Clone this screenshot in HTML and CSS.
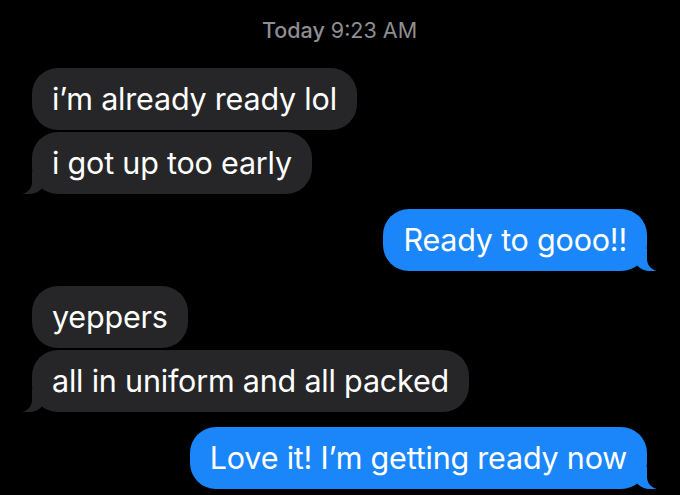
FILE: index.html
```html
<!DOCTYPE html>
<html>
	<head>
		<meta charset="UTF-8">
		<title>Messages</title>
		<link rel="stylesheet" href="styles.css">
	</head>
	<body>
		<div class="thread">
			<div class="stamp"><span class="day">Today</span> 9:23 AM</div>

			<div class="group in">
				<div class="bubble">i’m already ready lol</div>
				<div class="bubble tail">i got up too early</div>
			</div>

			<div class="group out">
				<div class="bubble tail">Ready to gooo!!</div>
			</div>

			<div class="group in">
				<div class="bubble">yeppers</div>
				<div class="bubble tail">all in uniform and all packed</div>
			</div>

			<div class="group out">
				<div class="bubble tail">Love it! I’m getting ready now</div>
			</div>
		</div>
	</body>
</html>
```
FILE: styles.css
```css
* {
	padding: 0;
	margin: 0;
	box-sizing: border-box;
}

body {
	background: #000;
	font-family: Inter, "Noto Sans", sans-serif;
	overflow: hidden;
}

.thread {
	padding: 17px 33px 0 32px;
	display: flex;
	flex-direction: column;
}

.stamp {
	text-align: center;
	color: #8e8e93;
	font-size: 21.5px;
	line-height: 26px;
	margin-bottom: 25px;
}

.day {
	font-weight: 500;
}

.group {
	display: flex;
	flex-direction: column;
	gap: 2px;
	margin-bottom: 15px;
}

.group.in {
	align-items: flex-start;
}

.group.out {
	align-items: flex-end;
}

.bubble {
	position: relative;
	font-size: 30.5px;
	line-height: 36px;
	letter-spacing: -0.2px;
	color: #fff;
	padding: 13px 20px;
	border-radius: 26px;
}

.in .bubble {
	background: #262628;
}

.out .bubble {
	background: #1b86f9;
}

/* little tails under the last bubble */
.tail::before,
.tail::after {
	content: "";
	position: absolute;
	bottom: 0;
	height: 22px;
}

.in .tail::before {
	left: -9px;
	width: 24px;
	background: #262628;
	border-bottom-right-radius: 18px;
}

.in .tail::after {
	left: -14px;
	width: 14px;
	background: #000;
	border-bottom-right-radius: 12px;
}

.out .tail::before {
	right: -9px;
	width: 24px;
	background: #1b86f9;
	border-bottom-left-radius: 18px;
}

.out .tail::after {
	right: -14px;
	width: 14px;
	background: #000;
	border-bottom-left-radius: 12px;
}
```
